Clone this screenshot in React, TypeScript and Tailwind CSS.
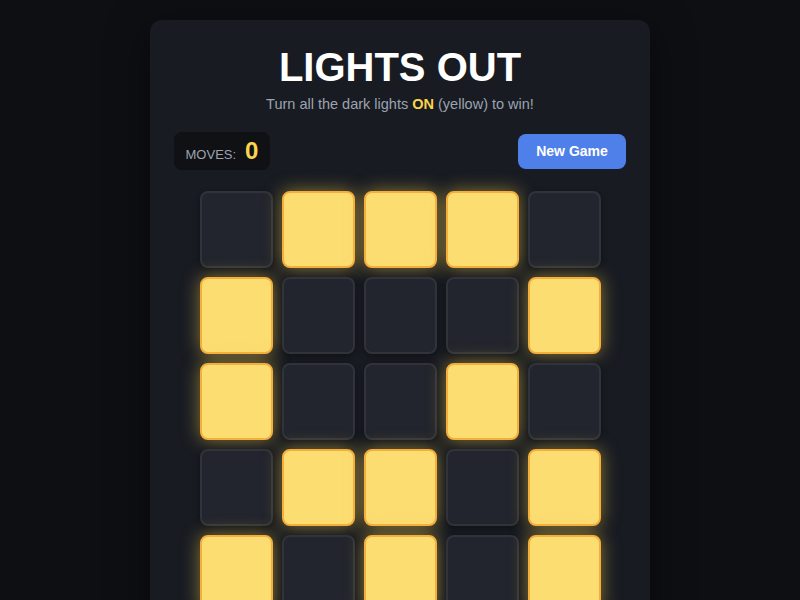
import React from "react";

const BOARD = [
  [0, 1, 1, 1, 0],
  [1, 0, 0, 0, 1],
  [1, 0, 0, 1, 0],
  [0, 1, 1, 0, 1],
  [1, 0, 1, 0, 1],
];

export default function App() {
  return (
    <div
      className="min-h-screen w-full bg-[#0d0f13] flex justify-center pt-5 overflow-hidden"
      style={{ fontFamily: '"Liberation Sans", Arial, sans-serif' }}
    >
      <div className="w-[500px] h-[620px] rounded-xl bg-[#181b22] px-6 pt-[27px] shadow-[0_10px_40px_rgba(0,0,0,0.5)]">
        <h1 className="text-center text-[40px] leading-[40px] font-bold text-white">LIGHTS OUT</h1>
        <p className="mt-[8px] text-center text-[14.5px] leading-[18px] text-[#9ca3af]">
          Turn all the dark lights <span className="font-bold text-[#fcd34d]">ON</span> (yellow) to win!
        </p>
        <div className="mt-[19px] flex items-center justify-between">
          <div className="h-[38px] w-[96px] rounded-lg bg-[#0f1115] flex items-baseline justify-center gap-[9px] pt-[6px]">
            <span className="text-[13px] text-[#9ca3af]">MOVES:</span>
            <span className="text-[24px] font-bold text-[#fcd34d] leading-[26px]">0</span>
          </div>
          <button className="h-[35px] w-[108px] rounded-lg bg-[#4f7fe8] text-white text-[14px] font-bold">
            New Game
          </button>
        </div>
        <div className="mx-auto mt-[21px] grid w-[401px] grid-cols-5 gap-x-[9px] gap-y-[9px]">
          {BOARD.flat().map((on, i) =>
            on ? (
              <div
                key={i}
                className="h-[77px] rounded-lg border-2 border-[#f6ae3a] bg-[#fcdd72] shadow-[0_0_18px_rgba(252,211,77,0.5)]"
              />
            ) : (
              <div
                key={i}
                className="h-[77px] rounded-lg border-2 border-[#30333a] bg-[#22252d] shadow-[0_2px_6px_rgba(0,0,0,0.35)]"
              />
            )
          )}
        </div>
      </div>
    </div>
  );
}
